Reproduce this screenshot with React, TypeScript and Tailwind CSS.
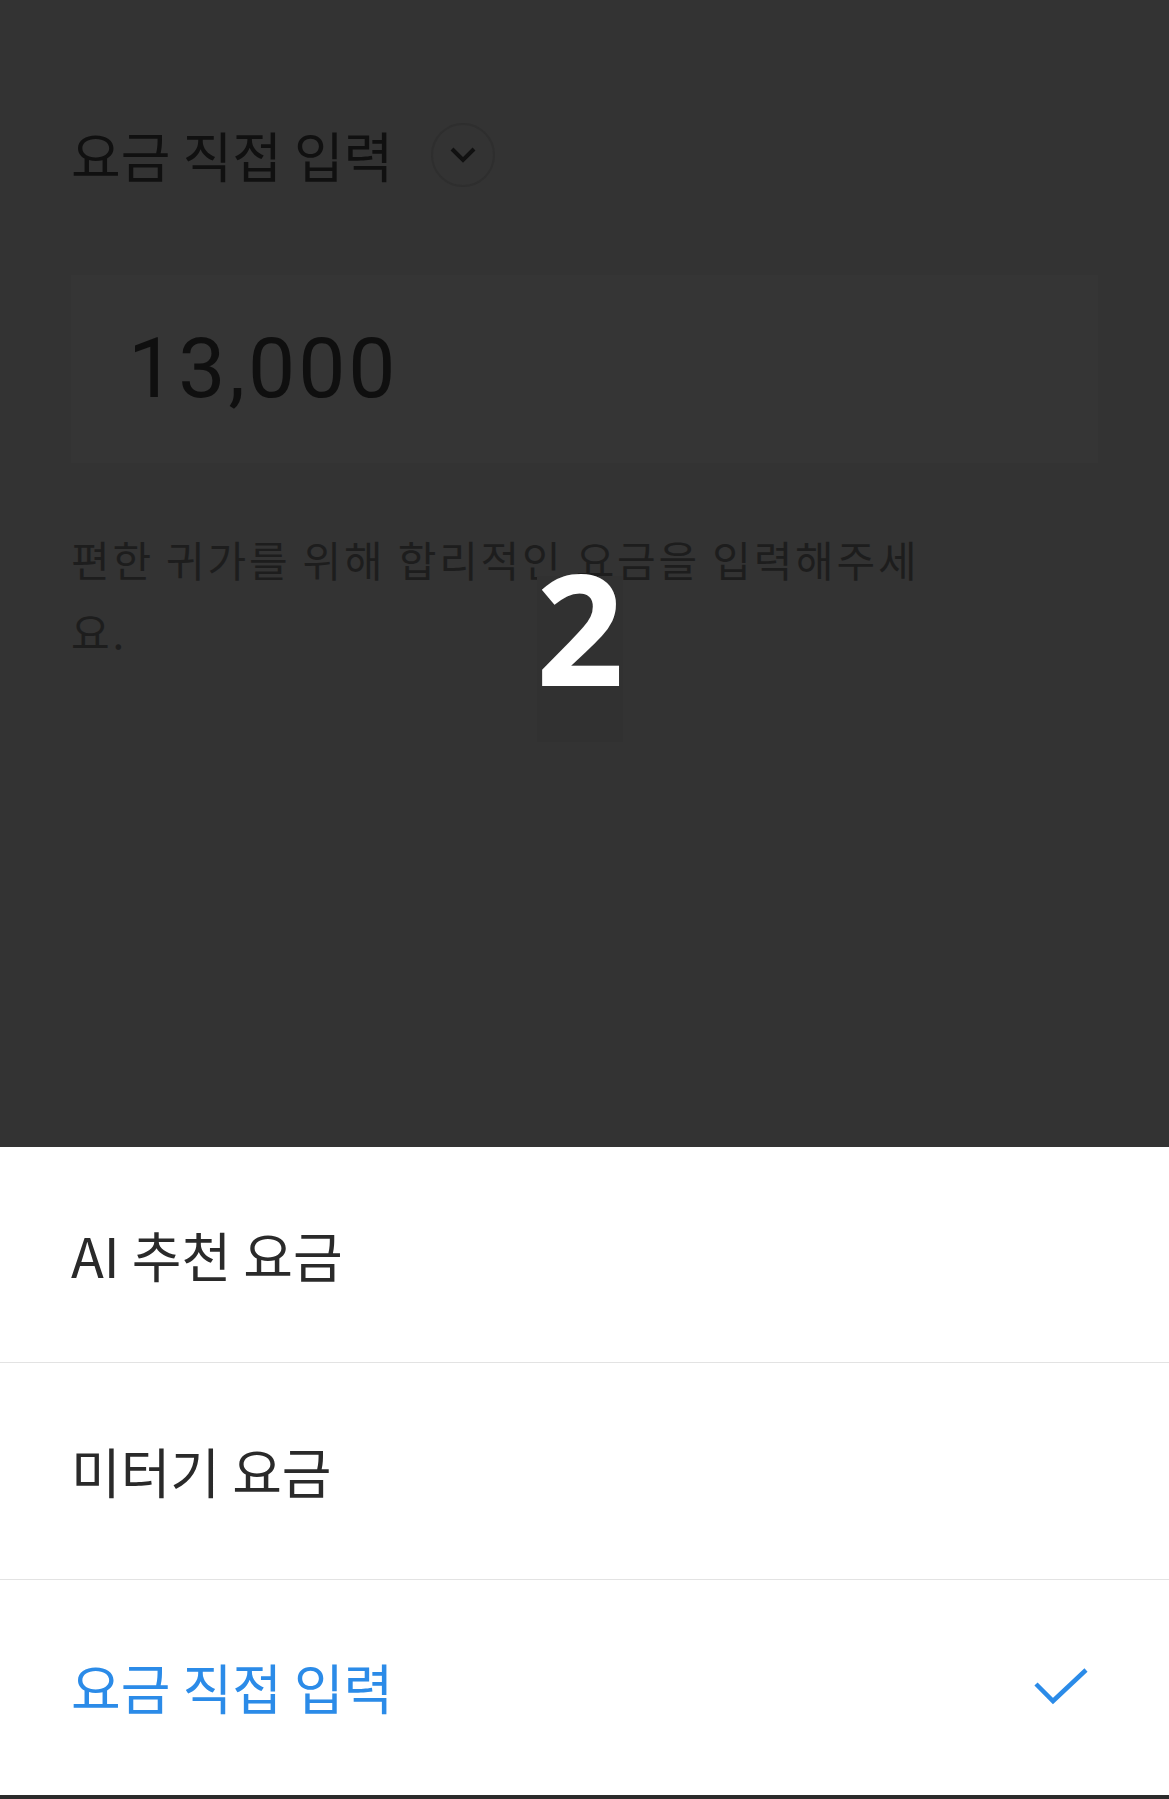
import React from "react";

const kr = { fontFamily: '"Noto Sans CJK KR", "Noto Sans", sans-serif' };

export default function App() {
  const options = [
    { label: "AI 추천 요금", active: false },
    { label: "미터기 요금", active: false },
    { label: "요금 직접 입력", active: true },
  ];

  return (
    <div className="relative flex h-[1799px] w-full flex-col bg-[#333333]" style={kr}>
      {/* dimmed page content */}
      <div className="flex-1 px-[71px] pt-[120px]">
        <div className="flex items-center gap-[38px]">
          <span className="text-[54px] leading-[70px] text-[#101010]">요금 직접 입력</span>
          <span className="flex h-[64px] w-[64px] items-center justify-center rounded-full border-2 border-[#2e2e2e]">
            <svg width="30" height="20" viewBox="0 0 30 20" fill="none">
              <path d="M4 4 L15 15 L26 4" stroke="#111111" strokeWidth="4" />
            </svg>
          </span>
        </div>

        <div className="mt-[85px] flex h-[188px] items-center bg-[#353535] pl-[57px]">
          <span
            className="text-[84px] leading-none tracking-[3px] text-[#0f0f0f]"
            style={{ fontFamily: 'Roboto, "Noto Sans", sans-serif' }}
          >
            13,000
          </span>
        </div>

        <p className="mt-[60px] max-w-[880px] text-[42px] leading-[72px] tracking-[2.8px] text-[#1d1d1d]">
          편한 귀가를 위해 합리적인 요금을 입력해주세요.
        </p>
      </div>

      {/* bottom sheet */}
      <div className="flex h-[648px] flex-col bg-white">
        {options.map((o, i) => (
          <div
            key={o.label}
            className={`flex flex-1 items-center justify-between pl-[71px] pr-[80px] ${
              i > 0 ? "border-t border-[#e3e3e3]" : ""
            }`}
          >
            <span
              className={`text-[54px] leading-none ${o.active ? "text-[#2b8be8]" : "text-[#2a2a2a]"}`}
            >
              {o.label}
            </span>
            {o.active && (
              <svg width="56" height="40" viewBox="0 0 56 40" fill="none">
                <path d="M3 17 L20 34 L53 3" stroke="#2b8be8" strokeWidth="4.5" />
              </svg>
            )}
          </div>
        ))}
      </div>
      <div className="h-[4px] bg-[#2b2b2b]" />

      {/* step badge */}
      <div className="absolute left-[537px] top-[576px] flex h-[166px] w-[86px] items-start justify-center bg-[#313131]">
        <span
          className="mt-[-27px] text-[154px] font-bold leading-[1] text-white"
          style={{ fontFamily: '"Open Sans", "Noto Sans", sans-serif' }}
        >
          2
        </span>
      </div>
    </div>
  );
}
